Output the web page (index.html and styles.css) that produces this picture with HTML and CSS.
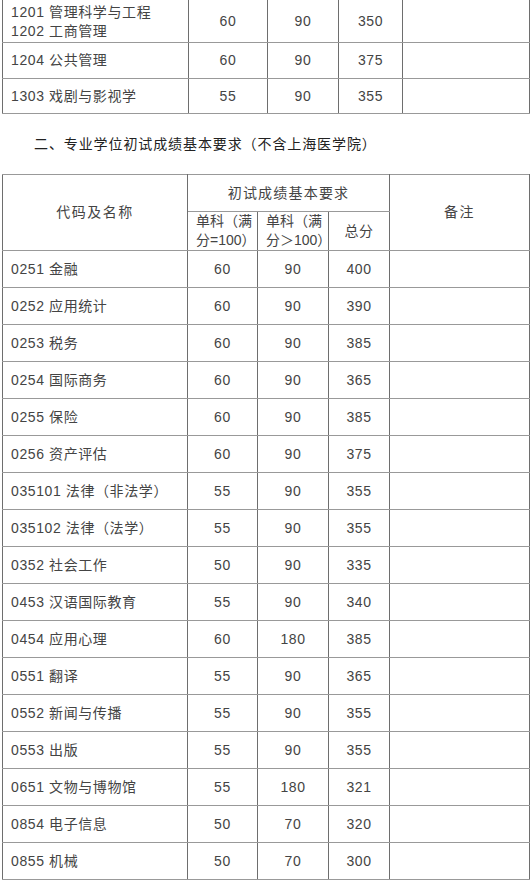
FILE: index.html
```html
<!DOCTYPE html>
<html lang="zh">
<head>
<meta charset="utf-8">
<link rel="stylesheet" href="styles.css">
</head>
<body>
<div class="page">
  <table class="grid t1">
    <colgroup>
      <col class="c1a"><col class="c1b"><col class="c1c"><col class="c1d"><col class="c1e">
    </colgroup>
    <tr class="r-first">
      <td class="name">1201 管理科学与工程<br>1202 工商管理</td><td>60</td><td>90</td><td>350</td><td></td>
    </tr>
    <tr class="r36">
      <td class="name">1204 公共管理</td><td>60</td><td>90</td><td>375</td><td></td>
    </tr>
    <tr class="r35">
      <td class="name">1303 戏剧与影视学</td><td>55</td><td>90</td><td>355</td><td></td>
    </tr>
  </table>

  <h2 class="title">二、专业学位初试成绩基本要求（不含上海医学院）</h2>

  <table class="grid t2">
    <colgroup>
      <col class="c2a"><col class="c2b"><col class="c2c"><col class="c2d"><col class="c2e">
    </colgroup>
    <tr class="h1">
      <td rowspan="2" class="hname">代码及名称</td>
      <td colspan="3" class="hgroup">初试成绩基本要求</td>
      <td rowspan="2" class="hname">备注</td>
    </tr>
    <tr class="h2">
      <td class="sub">单科（满<br>分=100）</td>
      <td class="sub">单科（满<br>分＞100）</td>
      <td>总分</td>
    </tr>
    <tr><td class="name">0251 金融</td><td>60</td><td>90</td><td>400</td><td></td></tr>
    <tr><td class="name">0252 应用统计</td><td>60</td><td>90</td><td>390</td><td></td></tr>
    <tr><td class="name">0253 税务</td><td>60</td><td>90</td><td>385</td><td></td></tr>
    <tr><td class="name">0254 国际商务</td><td>60</td><td>90</td><td>365</td><td></td></tr>
    <tr><td class="name">0255 保险</td><td>60</td><td>90</td><td>385</td><td></td></tr>
    <tr><td class="name">0256 资产评估</td><td>60</td><td>90</td><td>375</td><td></td></tr>
    <tr><td class="name">035101 法律（非法学）</td><td>55</td><td>90</td><td>355</td><td></td></tr>
    <tr><td class="name">035102 法律（法学）</td><td>55</td><td>90</td><td>355</td><td></td></tr>
    <tr><td class="name">0352 社会工作</td><td>50</td><td>90</td><td>335</td><td></td></tr>
    <tr><td class="name">0453 汉语国际教育</td><td>55</td><td>90</td><td>340</td><td></td></tr>
    <tr><td class="name">0454 应用心理</td><td>60</td><td>180</td><td>385</td><td></td></tr>
    <tr><td class="name">0551 翻译</td><td>55</td><td>90</td><td>365</td><td></td></tr>
    <tr><td class="name">0552 新闻与传播</td><td>55</td><td>90</td><td>355</td><td></td></tr>
    <tr><td class="name">0553 出版</td><td>55</td><td>90</td><td>355</td><td></td></tr>
    <tr><td class="name">0651 文物与博物馆</td><td>55</td><td>180</td><td>321</td><td></td></tr>
    <tr><td class="name">0854 电子信息</td><td>50</td><td>70</td><td>320</td><td></td></tr>
    <tr><td class="name">0855 机械</td><td>50</td><td>70</td><td>300</td><td></td></tr>
  </table>
</div>
</body>
</html>
```

FILE: styles.css
```css
html, body {
  margin: 0;
  padding: 0;
  background: #ffffff;
}

body {
  font-family: "Liberation Sans", "Noto Sans CJK SC", sans-serif;
  font-size: 14px;
  color: #444444;
  overflow: hidden;
}

.page {
  padding-left: 2px;
  width: 527px;
}

.grid {
  border-collapse: collapse;
  table-layout: fixed;
  width: 527px;
}

.grid td {
  border-top: 1px solid #999999;
  border-bottom: 1px solid #999999;
  border-left: 1px solid #6e6e6e;
  border-right: 1px solid #6e6e6e;
  padding: 0 8px;
  text-align: center;
  vertical-align: middle;
  line-height: 19px;
  letter-spacing: 0.6px;
  white-space: nowrap;
}

.grid td.name {
  text-align: left;
}

.t1 {
  margin-top: -4px;
}

.c1a { width: 186px; }
.c1b { width: 79px; }
.c1c { width: 71px; }
.c1d { width: 64px; }
.c1e { width: 127px; }

.t1 .r-first { height: 46px; }
.t1 .r-first td { padding-top: 4px; }
.t1 .r36 { height: 36px; }
.t1 .r35 { height: 35px; }

.title {
  margin: 20px 0 20px 32px;
  font-size: 14px;
  font-weight: normal;
  line-height: 20px;
  color: #222222;
  letter-spacing: 0.9px;
}

.c2a { width: 185px; }
.c2b { width: 70px; }
.c2c { width: 71px; }
.c2d { width: 61px; }
.c2e { width: 140px; }

.t2 tr { height: 37px; }
.t2 tr.h1 { height: 37px; }
.t2 tr.h2 { height: 39px; }

.grid td.hname {
  letter-spacing: 1.5px;
}

.grid td.hgroup {
  letter-spacing: 1.2px;
}

.grid td.sub {
  text-align: left;
  padding: 0 2px 0 8px;
  letter-spacing: 0;
}
```
